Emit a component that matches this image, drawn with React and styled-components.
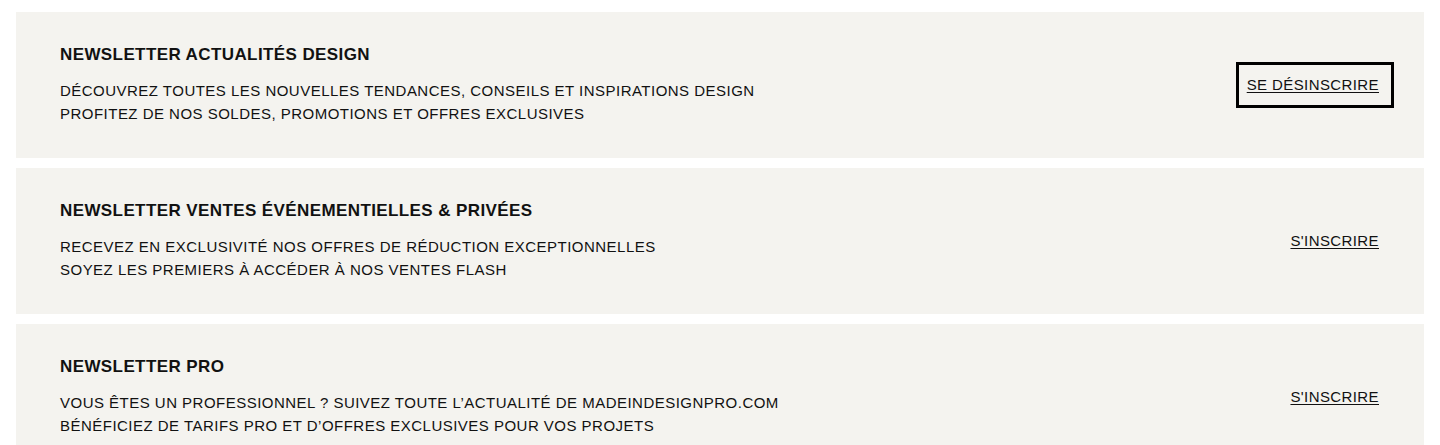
import React from "react";
import styled, { createGlobalStyle } from "styled-components";

const GlobalStyle = createGlobalStyle`
  body {
    margin: 0;
    background: #ffffff;
    font-family: "Liberation Sans", Arial, sans-serif;
    color: #111111;
  }
`;

const List = styled.div`
  display: flex;
  flex-direction: column;
  gap: 10px;
  padding: 12px 16px 0;
`;

const Card = styled.div`
  display: flex;
  align-items: flex-start;
  justify-content: space-between;
  background: #f4f3ef;
  height: 146px;
  padding: 33px 30px 0 44px;
  box-sizing: border-box;
`;

const Info = styled.div`
  display: flex;
  flex-direction: column;
`;

const Title = styled.h3`
  margin: 0 0 14px;
  font-size: 17px;
  line-height: 20px;
  font-weight: 700;
  letter-spacing: 0.4px;
`;

const Desc = styled.p`
  margin: 0;
  font-size: 15px;
  line-height: 23px;
  letter-spacing: 0.48px;
`;

const Action = styled.a`
  display: inline-block;
  align-self: center;
  margin-top: -33px;
  font-size: 15px;
  line-height: 18px;
  letter-spacing: 0.4px;
  color: #111111;
  text-decoration: underline;
  text-underline-offset: 2px;
  cursor: pointer;
  padding: 11px 12px 11px 8px;
  border: 3px solid ${({ $active }) => ($active ? "#000" : "transparent")};
`;

const newsletters = [
  {
    title: "NEWSLETTER ACTUALITÉS DESIGN",
    lines: [
      "DÉCOUVREZ TOUTES LES NOUVELLES TENDANCES, CONSEILS ET INSPIRATIONS DESIGN",
      "PROFITEZ DE NOS SOLDES, PROMOTIONS ET OFFRES EXCLUSIVES",
    ],
    subscribed: true,
  },
  {
    title: "NEWSLETTER VENTES ÉVÉNEMENTIELLES & PRIVÉES",
    lines: [
      "RECEVEZ EN EXCLUSIVITÉ NOS OFFRES DE RÉDUCTION EXCEPTIONNELLES",
      "SOYEZ LES PREMIERS À ACCÉDER À NOS VENTES FLASH",
    ],
    subscribed: false,
  },
  {
    title: "NEWSLETTER PRO",
    lines: [
      "VOUS ÊTES UN PROFESSIONNEL ? SUIVEZ TOUTE L’ACTUALITÉ DE MADEINDESIGNPRO.COM",
      "BÉNÉFICIEZ DE TARIFS PRO ET D’OFFRES EXCLUSIVES POUR VOS PROJETS",
    ],
    subscribed: false,
  },
];

const App = () => {
  return (
    <>
      <GlobalStyle />
      <List>
        {newsletters.map((n) => (
          <Card key={n.title}>
            <Info>
              <Title>{n.title}</Title>
              {n.lines.map((l) => (
                <Desc key={l}>{l}</Desc>
              ))}
            </Info>
            <Action $active={n.subscribed}>
              {n.subscribed ? "SE DÉSINSCRIRE" : "S'INSCRIRE"}
            </Action>
          </Card>
        ))}
      </List>
    </>
  );
};

export default App;
